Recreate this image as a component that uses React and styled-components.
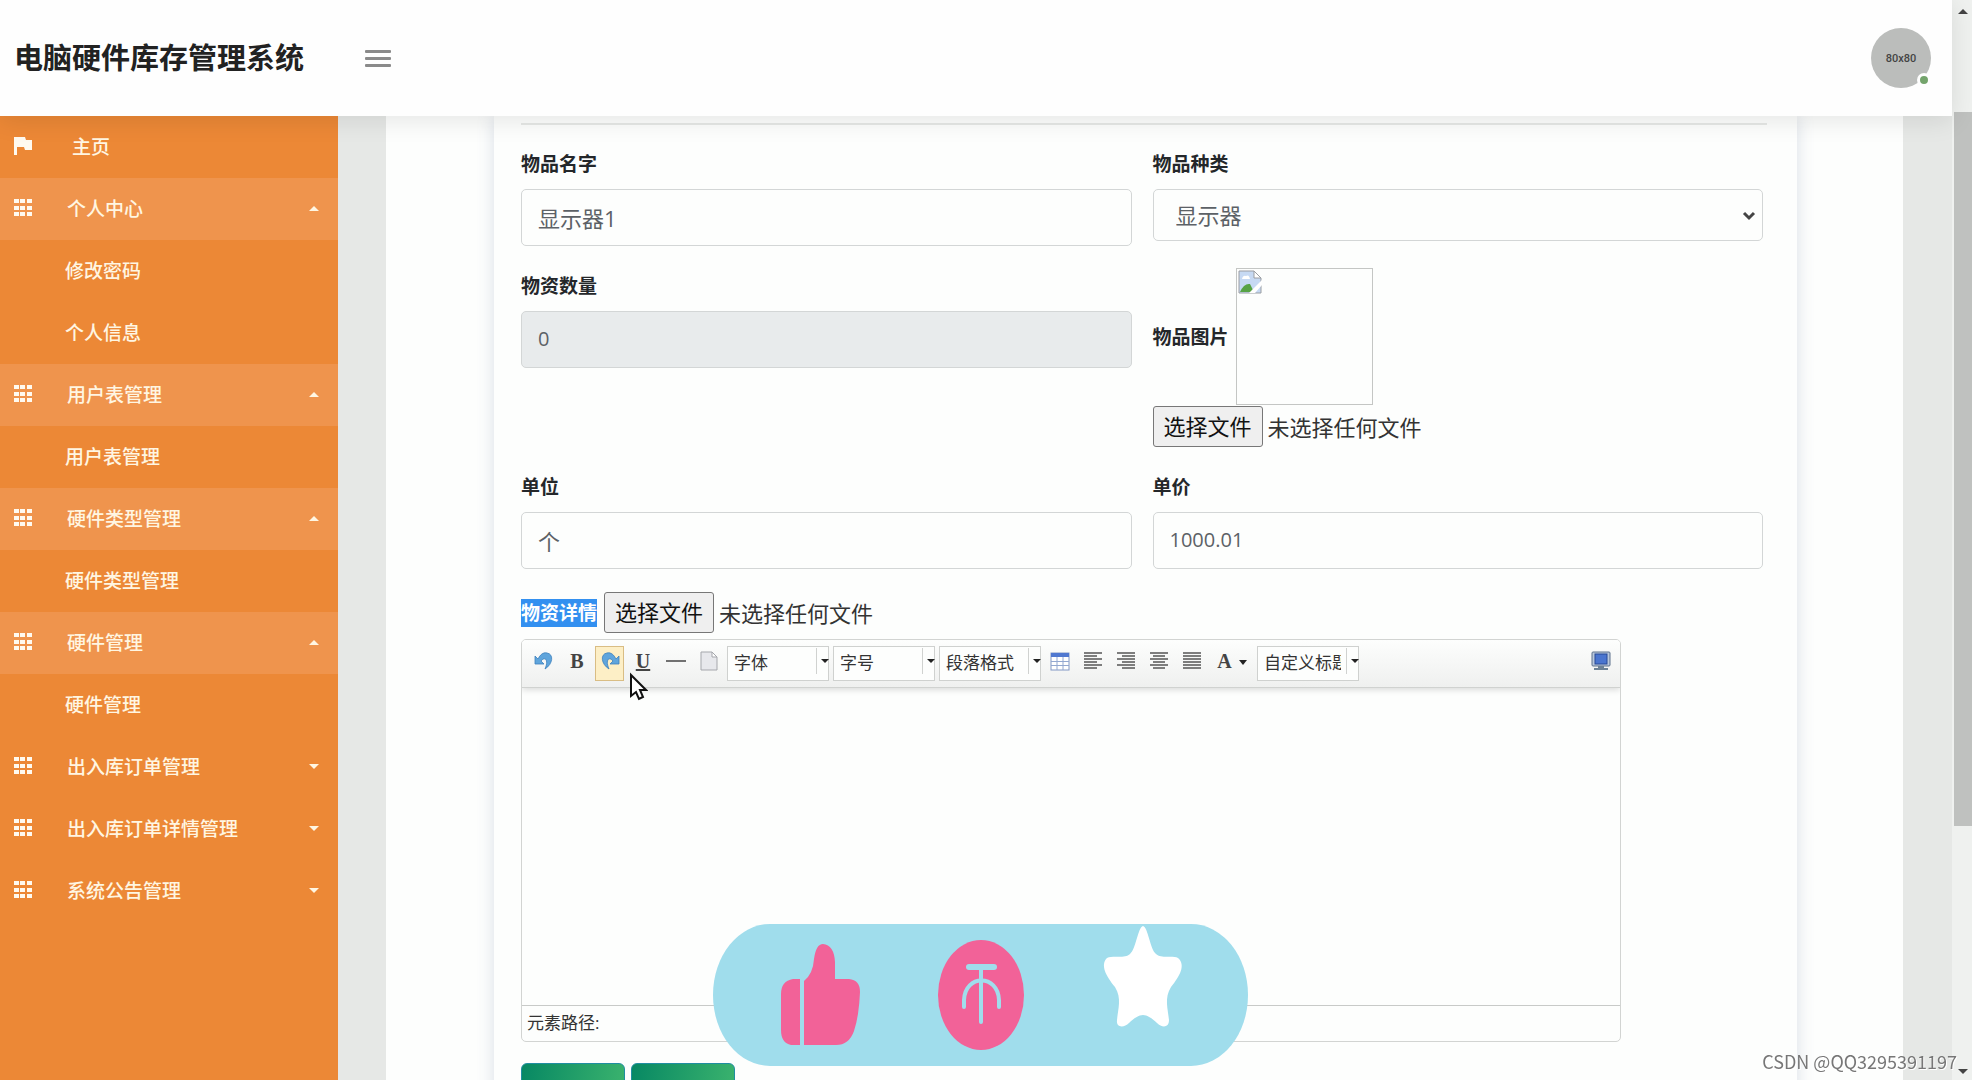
import { useRef } from "react";
import styled, { createGlobalStyle } from "styled-components";

const GlobalStyle = createGlobalStyle`
    *, *::before, *::after {
        box-sizing: border-box;
    }
    body {
        margin: 0;
        background: #fdfefd;
        color: #212529;
        font-family: "Open Sans", "Noto Sans CJK SC", sans-serif;
    }
    button, input, select, textarea {
        font-family: inherit;
        margin: 0;
    }
`

const Page = styled.div`
    display: flex;
    height: 100vh;
    overflow: hidden;
`

const Screen = styled.div`
    flex: 1;
    min-width: 0;
    display: flex;
    flex-direction: column;
`

const Header = styled.header`
    display: flex;
    align-items: center;
    flex: none;
    height: 116px;
    padding: 0 21px 0 14px;
    background: #fefefe;
    box-shadow: 0 4px 24px rgba(0, 0, 0, 0.1);
    z-index: 2;
`

const Brand = styled.h1`
    margin: 0;
    width: 351px;
    font-size: 29px;
    line-height: 40px;
    font-weight: 700;
    color: #222;
`

const MenuButton = styled.button`
    display: flex;
    flex-direction: column;
    gap: 4px;
    width: 26px;
    padding: 0;
    border: none;
    background: none;
    cursor: pointer;
`

const MenuLine = styled.span`
    height: 3px;
    border-radius: 1px;
    background: #8a8a8a;
`

const Avatar = styled.div`
    position: relative;
    display: flex;
    align-items: center;
    justify-content: center;
    width: 60px;
    height: 60px;
    margin-left: auto;
    border-radius: 50%;
    background: #bbbdbb;
    color: #444;
    font: 500 11px Roboto, sans-serif;
`

const Online = styled.span`
    position: absolute;
    right: 0;
    bottom: 1px;
    width: 14px;
    height: 14px;
    border: 3px solid #fefefe;
    border-radius: 50%;
    background: #74a46c;
`

const Body = styled.div`
    flex: 1;
    min-height: 0;
    display: flex;
`

const Sidebar = styled.nav`
    flex: none;
    width: 338px;
    background: #ec8836;
`

const MenuRow = styled.a`
    display: flex;
    align-items: center;
    height: 62px;
    padding: ${props => props.$sub ? '0 19px 0 65px' : '0 19px 0 14px'};
    background: ${props => props.$open ? '#ef944d' : 'transparent'};
    color: #fff6e2;
    font-size: 19px;
    line-height: 28px;
    font-weight: 500;
    text-decoration: none;
    & > svg {
        margin-bottom: 2px;
    }
`

const MenuText = styled.span`
    flex: 1;
    padding-left: ${props => props.$home ? '38px' : '33px'};
`

const Main = styled.main`
    flex: 1;
    min-width: 0;
    padding: 0 49px 0 48px;
    background: #e6e8e6;
`

const Panel = styled.div`
    height: 100%;
    padding: 0 106px 0 108px;
    overflow: hidden;
    background: #fdfefd;
`

const Card = styled.form`
    min-height: 100%;
    padding: 7px 30px 20px 27px;
    background: #fdfefd;
    box-shadow: 0 0 16px rgba(90, 110, 150, 0.22);
`

const Divider = styled.hr`
    height: 2px;
    margin: 0 0 21px;
    border: none;
    background: #e7e9e7;
`

const Fields = styled.div`
    display: grid;
    grid-template-columns: 1fr 1fr;
    gap: 22px 21px;
    padding-right: 4px;
`

const Field = styled.div`
    padding-top: 4px;
`

const Label = styled.label`
    font-size: 19px;
    line-height: 28px;
    font-weight: 700;
    color: ${props => props.$marked ? '#fff' : '#24272a'};
    background: ${props => props.$marked ? '#3390f0' : 'transparent'};
`

const FieldLabel = styled(Label)`
    display: block;
    margin-bottom: 11px;
`

const Input = styled.input`
    display: block;
    width: 100%;
    height: 57px;
    padding: 0 16px 2px;
    border: 1px solid #d3d6d6;
    border-radius: 5px;
    background: #fdfefd;
    color: #5c6166;
    font-size: ${props => props.$number ? '20px' : '22px'};
    &:disabled {
        background: #e8ebec;
    }
`

const SelectBox = styled.div`
    position: relative;
    & > svg {
        position: absolute;
        right: 7px;
        top: 22px;
        pointer-events: none;
    }
`

const Select = styled.select`
    display: block;
    appearance: none;
    width: 100%;
    height: 52px;
    padding: 0 30px 0 22px;
    border: 1px solid #d3d6d6;
    border-radius: 5px;
    background: #fdfefd;
    color: #5c6166;
    font-size: 22px;
`

const InlineRow = styled.div`
    display: flex;
    align-items: center;
    gap: 7px;
`

const DetailRow = styled(InlineRow)`
    margin: 23px 0 6px;
`

const Preview = styled.div`
    width: 137px;
    height: 137px;
    margin-bottom: 1px;
    padding: 1px;
    border: 1px solid #c4c6c4;
`

const FileBox = styled.div`
    display: flex;
    align-items: center;
    gap: 5px;
    font-size: 22px;
    line-height: 32px;
    color: #333;
`

const FileButton = styled.button`
    width: 110px;
    height: 41px;
    padding: 0 0 2px;
    border: 1px solid #777;
    border-radius: 3px;
    background: #efefef;
    color: #111;
    font-size: 22px;
    line-height: 32px;
`

const Editor = styled.div`
    max-width: 1100px;
    border: 1px solid #d2d4d2;
    border-radius: 5px;
    overflow: hidden;
`

const Toolbar = styled.div`
    position: relative;
    display: flex;
    align-items: flex-start;
    gap: 4px;
    padding: 6px 5px 6px 7px;
    border-bottom: 1px solid #d0d2d0;
    background: linear-gradient(#fdfefd, #eff0ef);
    box-shadow: 0 2px 6px rgba(0, 0, 0, 0.14);
`

const Tool = styled.button`
    display: flex;
    justify-content: center;
    align-items: flex-start;
    gap: 7px;
    width: ${props => props.$wide ? '43px' : '29px'};
    height: 35px;
    padding: 4px 0 0 1px;
    border: 1px solid ${props => props.$active ? '#d9bd84' : 'transparent'};
    background: ${props => props.$active ? '#fdefc6' : 'none'};
    color: #444;
    font: 700 20px/20px "Liberation Serif", serif;
    text-decoration: ${props => props.$underline ? 'underline' : 'none'};
    text-decoration-thickness: 2px;
    & > svg {
        flex: none;
    }
`

const LastTool = styled(Tool)`
    margin-left: auto;
`

const Combo = styled.div`
    position: relative;
    width: 102px;
    & > svg {
        position: absolute;
        right: 0;
        top: 13px;
        pointer-events: none;
    }
    &::after {
        content: "";
        position: absolute;
        right: 12px;
        top: 2px;
        height: 26px;
        border-left: 1px solid #d0d2d0;
    }
`

const ComboSelect = styled.select`
    display: block;
    appearance: none;
    width: 100%;
    height: 35px;
    padding: 0 17px 3px 6px;
    border: 1px solid #cfd1cf;
    border-radius: 0;
    background: #fdfefd;
    color: #333;
    font-size: 17px;
    text-overflow: clip;
`

const EditArea = styled.textarea`
    display: block;
    width: 100%;
    height: 317px;
    padding: 10px;
    border: none;
    background: #fdfefd;
    resize: none;
    outline: none;
`

const StatusBar = styled.div`
    height: 36px;
    padding: 0 5px;
    border-top: 1px solid #c8cac8;
    font-size: 17px;
    line-height: 34px;
    color: #333;
`

const Actions = styled.div`
    display: flex;
    gap: 6px;
    margin-top: 21px;
`

const ActionButton = styled.button`
    width: 104px;
    height: 48px;
    border: 1px solid #1f8ea0;
    border-radius: 6px;
    background: linear-gradient(100deg, #078863, #3cb46e);
`

const Scrollbar = styled.div`
    display: flex;
    flex-direction: column;
    align-items: center;
    flex: none;
    width: 20px;
    padding: 9px 0 6px 2px;
    background: #eff1ef;
    & > svg:last-child {
        margin-top: auto;
    }
`

const Thumb = styled.div`
    flex: none;
    width: 100%;
    height: 67%;
    margin-top: 98px;
    background: #bfc1bf;
`

const Reactions = styled.svg`
    position: fixed;
    left: 713px;
    bottom: 14px;
    z-index: 3;
`

const Pointer = styled.svg`
    position: fixed;
    left: 628px;
    top: 672px;
    z-index: 3;
`

const Watermark = styled.div`
    position: fixed;
    right: 15px;
    bottom: 6px;
    z-index: 4;
    color: #777;
    font: 18px/26px "Noto Sans CJK SC", sans-serif;
    text-shadow: 1px 1px 0 #fff;
`

const menu = [
    { name: '个人中心', open: true, items: ['修改密码', '个人信息'] },
    { name: '用户表管理', open: true, items: ['用户表管理'] },
    { name: '硬件类型管理', open: true, items: ['硬件类型管理'] },
    { name: '硬件管理', open: true, items: ['硬件管理'] },
    { name: '出入库订单管理', open: false, items: [] },
    { name: '出入库订单详情管理', open: false, items: [] },
    { name: '系统公告管理', open: false, items: [] },
]

const lines = {
    left: [[1, 19], [1, 14], [1, 19], [1, 14], [1, 19], [1, 14]],
    right: [[1, 19], [6, 19], [1, 19], [6, 19], [1, 19], [6, 19]],
    center: [[1, 19], [4, 16], [1, 19], [4, 16], [1, 19], [4, 16]],
    justify: [[1, 19], [1, 19], [1, 19], [1, 19], [1, 19], [1, 19]],
}

function Caret({ up, size = 10, color = '#fff6e2' }){
    return(
        <svg width={size} height={size / 2} viewBox="0 0 10 5">
            <path d={up ? 'M0 5L5 0L10 5Z' : 'M0 0L5 5L10 0Z'} fill={color} />
        </svg>
    )
}

function FlagIcon(){
    return(
        <svg width="20" height="20" viewBox="0 0 20 20">
            <path d="M0 1H11L12 4H18V14H11L10 11H3V19H0Z" fill="#fffaf0" />
        </svg>
    )
}

function GridIcon(){
    return(
        <svg width="20" height="20" viewBox="0 0 20 20" fill="#fffaf0">
            {[1, 8, 14].map(y => [0, 6, 13].map(x => (
                <rect key={x + '-' + y} x={x} y={y} width="5" height="4" />
            )))}
        </svg>
    )
}

function UndoIcon({ flip }){
    return(
        <svg width="20" height="20" viewBox="0 0 20 20">
            <g transform={flip ? 'translate(20 0) scale(-1 1)' : undefined}>
                <path d="M1 5V13H10L7 10C11 5 15 9 11 18C19 13 20 3 13 2C9 1 6 4 4 8Z" fill="#5fa5dc" stroke="#3c80bd" strokeWidth="0.8" />
            </g>
        </svg>
    )
}

function PageIcon(){
    return(
        <svg width="20" height="20" viewBox="0 0 20 20">
            <path d="M2 1H13L18 6V19H2Z" fill="#e7e8ec" stroke="#a5a7ac" />
            <path d="M13 1V6H18Z" fill="#fff" stroke="#a5a7ac" />
        </svg>
    )
}

function TableIcon(){
    return(
        <svg width="20" height="20" viewBox="0 0 20 20">
            <rect x="1" y="2" width="18" height="17" fill="#fff" stroke="#8298c4" />
            <rect x="1" y="2" width="18" height="4" fill="#5078d0" />
            <path d="M1 10.5H19M1 14.5H19M7 6V19M13 6V19" stroke="#93a8d0" fill="none" />
        </svg>
    )
}

function AlignIcon({ type }){
    return(
        <svg width="20" height="20" viewBox="0 0 20 20" stroke="#555" strokeWidth="1.4">
            {lines[type].map(([from, to], i) => (
                <path key={i} d={`M${from} ${2 + i * 3}H${to}`} />
            ))}
        </svg>
    )
}

function ScreenIcon(){
    return(
        <svg width="20" height="20" viewBox="0 0 20 20">
            <rect x="1" y="1" width="18" height="14" rx="1" fill="#b9c8dc" stroke="#5c718c" />
            <rect x="4" y="3" width="12" height="10" fill="#4a75cf" stroke="#284a96" />
            <path d="M7 15H13V17H17V19H3V17H7Z" fill="#6d8296" />
        </svg>
    )
}

function BrokenImage(){
    return(
        <svg width="24" height="24" viewBox="0 0 24 24">
            <path d="M1 1H16L23 8V23H1Z" fill="#c6d9f3" stroke="#9a9da2" />
            <path d="M4 9Q5 5 8 6Q11 4 12 9Z" fill="#fff" />
            <path d="M2 22Q6 13 12 14L16 22Z" fill="#57a345" />
            <path d="M16 1V8H23Z" fill="#fff" stroke="#9a9da2" />
            <path d="M24 10L11 23H17L24 15Z" fill="#fff" />
        </svg>
    )
}

function FilePicker({ label }){
    const file = useRef(null)

    return(
        <FileBox>
            <input ref={file} type="file" aria-label={label} hidden />
            <FileButton type="button" onClick={() => file.current.click()}>选择文件</FileButton>
            <span>未选择任何文件</span>
        </FileBox>
    )
}

function ToolSelect({ name }){
    return(
        <Combo>
            <ComboSelect aria-label={name}>
                <option>{name}</option>
            </ComboSelect>
            <Caret size={8} color="#222" />
        </Combo>
    )
}

function RichEditor(){
    return(
        <Editor>
            <Toolbar>
                <Tool type="button" aria-label="撤销"><UndoIcon /></Tool>
                <Tool type="button">B</Tool>
                <Tool type="button" aria-label="重做" $active><UndoIcon flip /></Tool>
                <Tool type="button" $underline>U</Tool>
                <Tool type="button" aria-label="分隔线">
                    <svg width="20" height="20" viewBox="0 0 20 20"><path d="M0 10H20" stroke="#444" strokeWidth="1.5" /></svg>
                </Tool>
                <Tool type="button" aria-label="清空文档"><PageIcon /></Tool>
                <ToolSelect name="字体" />
                <ToolSelect name="字号" />
                <ToolSelect name="段落格式" />
                <Tool type="button" aria-label="插入表格"><TableIcon /></Tool>
                <Tool type="button" aria-label="居左对齐"><AlignIcon type="left" /></Tool>
                <Tool type="button" aria-label="居右对齐"><AlignIcon type="right" /></Tool>
                <Tool type="button" aria-label="居中对齐"><AlignIcon type="center" /></Tool>
                <Tool type="button" aria-label="两端对齐"><AlignIcon type="justify" /></Tool>
                <Tool type="button" $wide>
                    A
                    <svg width="8" height="20" viewBox="0 0 8 20"><path d="M0 9H8L4 14Z" fill="#222" /></svg>
                </Tool>
                <ToolSelect name="自定义标题" />
                <LastTool type="button" aria-label="全屏"><ScreenIcon /></LastTool>
            </Toolbar>
            <EditArea aria-label="物资详情" />
            <StatusBar>元素路径:</StatusBar>
        </Editor>
    )
}

function SideMenu(){
    return(
        <Sidebar>
            <MenuRow href="#">
                <FlagIcon />
                <MenuText $home>主页</MenuText>
            </MenuRow>
            {menu.map(group => (
                <div key={group.name}>
                    <MenuRow href="#" $open={group.open}>
                        <GridIcon />
                        <MenuText>{group.name}</MenuText>
                        <Caret up={group.open} />
                    </MenuRow>
                    {group.items.map(item => <MenuRow href="#" key={item} $sub>{item}</MenuRow>)}
                </div>
            ))}
        </Sidebar>
    )
}

function GoodsForm(){
    return(
        <Card>
            <Divider />
            <Fields>
                <Field>
                    <FieldLabel htmlFor="name">物品名字</FieldLabel>
                    <Input id="name" defaultValue="显示器1" />
                </Field>
                <Field>
                    <FieldLabel htmlFor="type">物品种类</FieldLabel>
                    <SelectBox>
                        <Select id="type">
                            <option>显示器</option>
                        </Select>
                        <svg width="14" height="10" viewBox="0 0 14 10">
                            <path d="M2 2L7 7L12 2" fill="none" stroke="#444" strokeWidth="3" />
                        </svg>
                    </SelectBox>
                </Field>
                <Field>
                    <FieldLabel htmlFor="amount">物资数量</FieldLabel>
                    <Input id="amount" defaultValue="0" disabled $number />
                </Field>
                <div>
                    <InlineRow>
                        <Label as="span">物品图片</Label>
                        <Preview><BrokenImage /></Preview>
                    </InlineRow>
                    <FilePicker label="物品图片" />
                </div>
                <Field>
                    <FieldLabel htmlFor="unit">单位</FieldLabel>
                    <Input id="unit" defaultValue="个" />
                </Field>
                <Field>
                    <FieldLabel htmlFor="price">单价</FieldLabel>
                    <Input id="price" defaultValue="1000.01" $number />
                </Field>
            </Fields>
            <DetailRow>
                <Label as="span" $marked>物资详情</Label>
                <FilePicker label="物资详情" />
            </DetailRow>
            <RichEditor />
            <Actions>
                <ActionButton type="button" aria-label="提交" />
                <ActionButton type="button" aria-label="返回" />
            </Actions>
        </Card>
    )
}

function ReactionBar(){
    return(
        <Reactions width="535" height="142" viewBox="0 0 535 142">
            <rect width="535" height="142" rx="57" ry="71" fill="#a0ddec" />
            <g fill="#f26298">
                <path d="M87 55H80Q68 57 68 70V106Q68 119 78 121H87Z" />
                <path d="M91 121V57Q100 50 101 35Q103 20 110 20Q121 21 122 38V55H136Q147 56 147 68Q146 92 141 107Q136 121 123 121Z" />
                <ellipse cx="268" cy="71" rx="43" ry="55" />
            </g>
            <g fill="none" stroke="#a0ddec" strokeLinecap="round">
                <path d="M256 43H281" strokeWidth="6" />
                <path d="M268 43V98" strokeWidth="4" />
                <path d="M251 83V76C252 50 285 50 286 76V83" strokeWidth="4" />
            </g>
            <path d="M430 2C435 3 437 25 443 30C448 35 460 31 465 34C473 41 467 52 458 63C451 74 455 85 456 96C456 104 449 104 444 99C439 94 434 91 430 91C426 91 421 94 416 99C411 104 403 104 404 96C405 85 409 74 402 63C393 52 387 41 394 34C400 31 412 35 417 30C423 25 425 3 430 2Z" fill="#fff" />
        </Reactions>
    )
}

function App(){
    return(
        <Page>
            <GlobalStyle />
            <Screen>
                <Header>
                    <Brand>电脑硬件库存管理系统</Brand>
                    <MenuButton aria-label="菜单">
                        <MenuLine />
                        <MenuLine />
                        <MenuLine />
                    </MenuButton>
                    <Avatar>80x80<Online /></Avatar>
                </Header>
                <Body>
                    <SideMenu />
                    <Main>
                        <Panel>
                            <GoodsForm />
                        </Panel>
                    </Main>
                </Body>
            </Screen>
            <Scrollbar>
                <Caret up color="#444" />
                <Thumb />
                <Caret color="#444" />
            </Scrollbar>
            <ReactionBar />
            <Pointer width="20" height="30" viewBox="0 0 20 30">
                <path d="M3 3V24L8 20L11 27L15 25L12 18H18Z" fill="#fff" stroke="#111" strokeWidth="2" />
            </Pointer>
            <Watermark>CSDN @QQ3295391197</Watermark>
        </Page>
    )
}

export default App;
